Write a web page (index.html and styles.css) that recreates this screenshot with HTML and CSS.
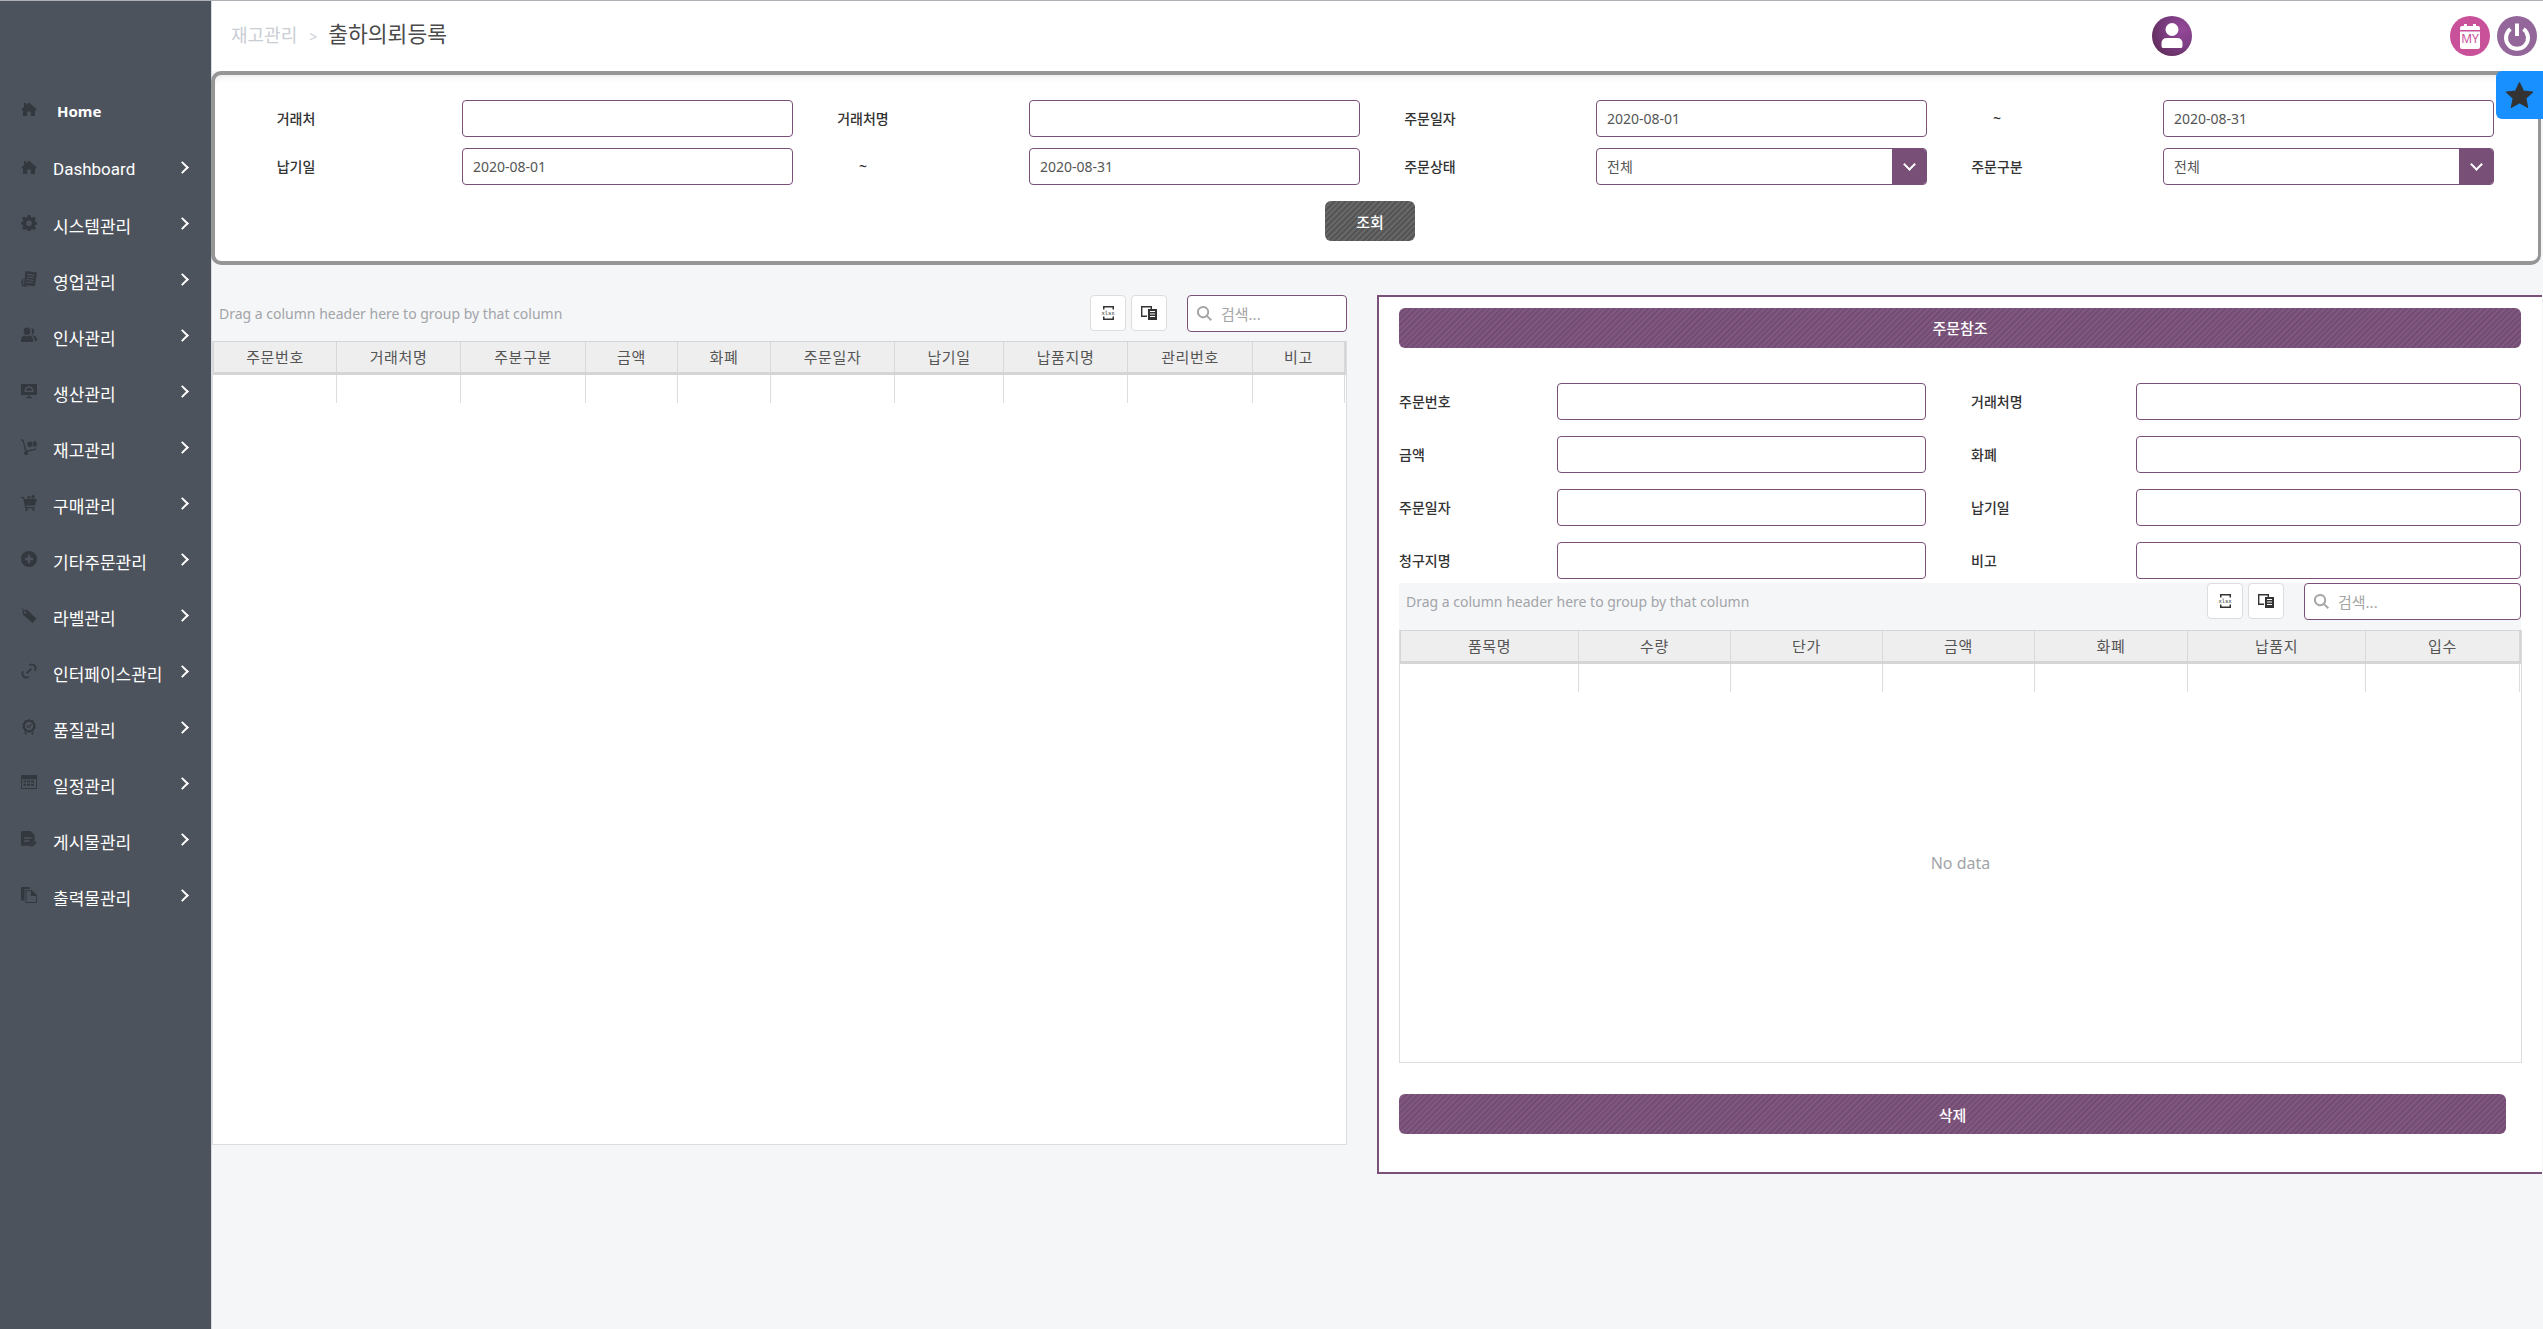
FILE: index.html
```html
<!DOCTYPE html>
<html lang="ko">
  <head>
    <meta charset="UTF-8" />
    <meta name="viewport" content="width=device-width, initial-scale=1.0" />
    <title>출하의뢰등록</title>
    <link rel="stylesheet" href="styles.css">
  </head>
  <body>
    <svg class="icon-defs" aria-hidden="true">
      <symbol id="i-home" viewBox="0 0 16 16"><path d="M8 1.6 15.8 8.6 14.7 9.7 14 9.1V15H9.8V10.6H6.2V15H2V9.1L1.3 9.7.2 8.6 3 6.1V2H5V4.3Z"/></symbol>
      <symbol id="i-cog" viewBox="0 0 16 16"><path fill-rule="evenodd" d="M6.6 0H9.4L9.8 2.2 11.2 2.8 13 1.5 15 3.500 13.7 5.300 14.200 6.700 16 7V9.600L14.200 10 13.700 11.400 15 13.200 13 15 11.200 13.900 9.800 14.400 9.400 16H6.600L6.200 14.400 4.800 13.900 3 15 1 13.200 2.300 11.400 1.800 10 0 9.600V7L1.800 6.700 2.300 5.300 1 3.500 3 1.500 4.800 2.800 6.200 2.200ZM8 5.500A2.800 2.800 0 1 0 8 11.100 2.800 2.800 0 1 0 8 5.500Z"/></symbol>
      <symbol id="i-news" viewBox="0 0 16 16"><path fill-rule="evenodd" d="M4.500 0 16 1.500 14 14.500 12.500 15.300 3 13.800 4.500 0ZM6.500 2.800 6.200 4 13.200 5 13.400 3.800ZM6 5.500 5.800 6.500 12.800 7.500 13 6.500ZM5.600 8 5.400 9 12.400 10 12.600 9ZM5.200 10.500 5 11.500 12 12.500 12.200 11.500Z"/><path d="M.5 9.500 2.500 7 2 13.500 8 15.500 2.500 15.800Q.5 15 .5 13Z"/></symbol>
      <symbol id="i-users" viewBox="0 0 16 16"><path d="M6 .5C8.200.5 9.400 2.200 9.400 4.200 9.400 6.200 8.200 8 6 8 3.800 8 2.600 6.200 2.600 4.200 2.600 2.200 3.800.5 6 .5ZM0 15V12.500C0 10.300 1.800 8.800 3.500 8.500 4.200 9 5 9.300 6 9.300 7 9.300 7.800 9 8.500 8.500 10.200 8.800 12 10.300 12 12.500V15ZM10 1.200C12 1 13.200 2.700 13.200 4.500 13.200 6.300 12 7.900 10.200 7.800 11 6.800 11.200 5.500 11.200 4.300 11.200 3.200 10.800 2.100 10 1.200ZM11 8.500C13 8.200 16 9.800 16 12.300V14H13.500V12.500C13.500 11 12.500 9.500 11 8.500Z"/></symbol>
      <symbol id="i-desktop" viewBox="0 0 16 16"><path fill-rule="evenodd" d="M0 1H16V12H0ZM8 3.200A4.500 4.500 0 0 0 3.500 7.700V9H12.500V7.700A4.500 4.500 0 0 0 8 3.200ZM8 4.800A2.900 2.900 0 0 1 10.900 7.700H5.100A2.900 2.900 0 0 1 8 4.800Z"/><path d="M5 14H7V12.500H9V14H11V15.300H5Z"/></symbol>
      <symbol id="i-dolly" viewBox="0 0 16 16"><path d="M0 0 2.500.8 5.500 11.500 15 9.500 15.300 10.800 6.600 12.800A2 2 0 1 1 4.200 12.300L1.600 2 0 1.400Z"/><path d="M6 3.500 10.500 2.300 11.800 7 7.300 8.200ZM11.500 3 15 2 16 7 12.800 7.700Z"/></symbol>
      <symbol id="i-cart" viewBox="0 0 16 16"><path d="M0 2H3L3.600 4H16L14 10.500H5.200L5.500 12H14V13.200H4.300L2.200 3.200H0Z"/><circle cx="5.500" cy="14.800" r="1.200"/><circle cx="12.500" cy="14.800" r="1.200"/><path d="M6 3.400 7 .8 9.500 1.400 9 3.400ZM10 3.400 11 0 14 .8 13.200 3.400Z"/></symbol>
      <symbol id="i-plus" viewBox="0 0 16 16"><path fill-rule="evenodd" d="M8 0A8 8 0 1 0 8 16 8 8 0 1 0 8 0ZM6.800 3.800H9.200V6.800H12.200V9.200H9.200V12.200H6.800V9.200H3.800V6.800H6.800Z"/></symbol>
      <symbol id="i-tag" viewBox="0 0 16 16"><path fill-rule="evenodd" d="M1.500 3.500 5.500 2.500 15.500 11.500 11.500 16 1.800 7.500ZM4.200 4.200A1.200 1.200 0 1 0 4.200 6.600 1.200 1.200 0 1 0 4.200 4.200Z"/><path d="M0 0 3 3 2.500 3.500 0 .8Z"/></symbol>
      <symbol id="i-link" viewBox="0 0 16 16"><path d="M10.800 0.500A4.700 4.700 0 0 1 14.300 8.300L13 7.200A3 3 0 0 0 8.800 3 L7.700 1.900A4.700 4.700 0 0 1 10.800.5ZM5.200 15.500A4.700 4.700 0 0 1 1.700 7.700L3 8.800A3 3 0 0 0 7.200 13L8.300 14.100A4.700 4.700 0 0 1 5.200 15.500ZM5 9.700 9.700 5 11 6.300 6.300 11Z"/></symbol>
      <symbol id="i-award" viewBox="0 0 16 16"><path fill-rule="evenodd" d="M8 0 10 1.200 12.400 1.200 13 3.400 14.800 5 14 7 14.800 9 13 10.600 12.400 12.600 10 12.800 8 14 6 12.800 3.600 12.600 3 10.600 1.200 9 2 7 1.200 5 3 3.400 3.600 1.200 6 1.200ZM8 2.800A4.200 4.200 0 1 0 8 11.200 4.200 4.200 0 1 0 8 2.800ZM11 5.600 7.500 9.200 5 7 5.800 6.100 7.400 7.500 10.200 4.700Z"/><path d="M3 13 5 13.500 6 14.500 4.500 16ZM13 13 11 13.500 10 14.500 11.500 16Z"/></symbol>
      <symbol id="i-calendar" viewBox="0 0 16 16"><path fill-rule="evenodd" d="M0 0H16V14H0ZM1 4.300V13H15V4.300Z"/><path d="M2.500 5.500H5V7.500H2.500ZM6 5.500H9V7.500H6ZM10 5.500H13V7.500H10ZM2.500 8.800H5V10.800H2.500ZM6 8.800H9V10.800H6ZM10 8.800H13V10.800H10Z"/></symbol>
      <symbol id="i-file" viewBox="0 0 16 16"><path fill-rule="evenodd" d="M1.500 0H9.500L13.500 4V9L9 14.800H1.500Q0 14.800 0 13.300V1.500Q0 0 1.500 0ZM3 6.300V7.700H10.500V6.300ZM3 9.300V10.700H8.500V9.300Z"/><path d="M13.800 9.800 15.800 11.500 11.500 15.600 9.500 16 9.800 14Z"/></symbol>
      <symbol id="i-copy" viewBox="0 0 16 16"><path d="M0 0H9V2H3.500V13.500H0Z"/><path fill-rule="evenodd" d="M4.500 3H10.500L16 8V16H4.500ZM5.500 4V15H15V9H9.800V4Z"/></symbol>
      <symbol id="i-excel" viewBox="0 0 11 14"><path d="M0 0H11V3.500H9.500V1.500H1.500V3.500H0ZM0 10.500H1.500V12.500H9.500V10.500H11V14H0Z"/></symbol>
      <symbol id="i-chooser" viewBox="0 0 16 16"><path fill-rule="evenodd" d="M0 1H11V4H9.600V2.400H1.400V10.600H6V12H0Z"/><path fill-rule="evenodd" d="M7 4H16V15H7ZM9 6V7H14V6ZM9 8.500V9.500H14V8.500ZM9 11V12H14V11Z"/></symbol>
      <symbol id="i-search" viewBox="0 0 16 16"><path d="M6.500 0A6.500 6.500 0 0 1 11.700 10.300L16 14.500 14.500 16 10.300 11.700A6.500 6.500 0 1 1 6.500 0ZM6.500 2A4.500 4.500 0 1 0 6.500 11 4.500 4.500 0 1 0 6.500 2Z"/></symbol>
    </svg>

    <div class="layout">
      <nav class="sidebar">
        <a class="nav-item nav-home"><svg class="nav-icon"><use href="#i-home"/></svg><span>Home</span></a>
        <a class="nav-item"><svg class="nav-icon"><use href="#i-home"/></svg><span class="nav-latin">Dashboard</span><i class="chevron"></i></a>
        <a class="nav-item"><svg class="nav-icon"><use href="#i-cog"/></svg><span>시스템관리</span><i class="chevron"></i></a>
        <a class="nav-item"><svg class="nav-icon"><use href="#i-news"/></svg><span>영업관리</span><i class="chevron"></i></a>
        <a class="nav-item"><svg class="nav-icon"><use href="#i-users"/></svg><span>인사관리</span><i class="chevron"></i></a>
        <a class="nav-item"><svg class="nav-icon"><use href="#i-desktop"/></svg><span>생산관리</span><i class="chevron"></i></a>
        <a class="nav-item"><svg class="nav-icon"><use href="#i-dolly"/></svg><span>재고관리</span><i class="chevron"></i></a>
        <a class="nav-item"><svg class="nav-icon"><use href="#i-cart"/></svg><span>구매관리</span><i class="chevron"></i></a>
        <a class="nav-item"><svg class="nav-icon"><use href="#i-plus"/></svg><span>기타주문관리</span><i class="chevron"></i></a>
        <a class="nav-item"><svg class="nav-icon"><use href="#i-tag"/></svg><span>라벨관리</span><i class="chevron"></i></a>
        <a class="nav-item"><svg class="nav-icon"><use href="#i-link"/></svg><span>인터페이스관리</span><i class="chevron"></i></a>
        <a class="nav-item"><svg class="nav-icon"><use href="#i-award"/></svg><span>품질관리</span><i class="chevron"></i></a>
        <a class="nav-item"><svg class="nav-icon"><use href="#i-calendar"/></svg><span>일정관리</span><i class="chevron"></i></a>
        <a class="nav-item"><svg class="nav-icon"><use href="#i-file"/></svg><span>게시물관리</span><i class="chevron"></i></a>
        <a class="nav-item"><svg class="nav-icon"><use href="#i-copy"/></svg><span>출력물관리</span><i class="chevron"></i></a>
      </nav>

      <main class="main">
        <header class="topbar">
          <div class="crumbs">
            <span class="crumb-parent">재고관리</span>
            <span class="crumb-sep">&gt;</span>
            <span class="crumb-title">출하의뢰등록</span>
          </div>
          <div class="round-btn user-btn">
            <svg viewBox="0 0 40 40"><circle cx="20" cy="13.500" r="6.500" fill="#fff"/><path d="M11 32Q9.500 32 9.500 30V27.500Q9.500 22 15 22H25Q30.500 22 30.500 27.500V30Q30.500 32 29 32Z" fill="#fff"/></svg>
          </div>
          <div class="round-btn my-btn">
            <svg viewBox="0 0 40 40"><path d="M10 12Q10 10 12 10H14V8H17V10H23V8H26V10H28Q30 10 30 12V31Q30 33 28 33H12Q10 33 10 31Z" fill="#fff"/><rect x="10" y="14" width="20" height="1.500" fill="#c9519a"/></svg>
            <span class="my-text">MY</span>
          </div>
          <div class="round-btn power-btn">
            <svg viewBox="0 0 40 40"><path d="M13.500 13A11 11 0 1 0 26.500 13" fill="none" stroke="#fff" stroke-width="4"/><path d="M20 7.500V20" stroke="#fff" stroke-width="4"/></svg>
          </div>
          <div class="star-tab">
            <svg viewBox="0 0 24 24"><path d="M12 1.500 15.200 8.300 22.800 9.200 17.200 14.300 18.700 21.800 12 18 5.300 21.800 6.800 14.300 1.200 9.200 8.800 8.300Z" fill="#333" stroke="#333" stroke-linejoin="round"/></svg>
          </div>
        </header>

        <section class="filter-panel">
          <div class="filter-grid">
            <div class="filter-item"><label>거래처</label><div class="input"></div></div>
            <div class="filter-item"><label>거래처명</label><div class="input"></div></div>
            <div class="filter-item"><label>주문일자</label><div class="input">2020-08-01</div></div>
            <div class="filter-item"><label>~</label><div class="input">2020-08-31</div></div>
            <div class="filter-item"><label>납기일</label><div class="input">2020-08-01</div></div>
            <div class="filter-item"><label>~</label><div class="input">2020-08-31</div></div>
            <div class="filter-item"><label>주문상태</label><div class="input select">전체<span class="select-arrow"><i class="chevron-down"></i></span></div></div>
            <div class="filter-item"><label>주문구분</label><div class="input select">전체<span class="select-arrow"><i class="chevron-down"></i></span></div></div>
          </div>
          <div class="filter-actions"><button class="search-btn">조회</button></div>
        </section>

        <div class="work">
          <section class="grid-left">
            <div class="grid-toolbar">
              <span class="group-hint">Drag a column header here to group by that column</span>
              <button class="tool-btn"><svg class="excel-icon"><use href="#i-excel"/></svg><b>xlsx</b></button>
              <button class="tool-btn"><svg class="chooser-icon"><use href="#i-chooser"/></svg></button>
              <div class="grid-search"><svg viewBox="0 0 16 16"><use href="#i-search"/></svg><span>검색...</span></div>
            </div>
            <div class="grid-box left-box">
              <div class="grid-head">
                <div>주문번호</div><div>거래처명</div><div>주분구분</div><div>금액</div><div>화폐</div><div>주문일자</div><div>납기일</div><div>납품지명</div><div>관리번호</div><div>비고</div>
              </div>
              <div class="grid-row">
                <div></div><div></div><div></div><div></div><div></div><div></div><div></div><div></div><div></div><div></div>
              </div>
            </div>
          </section>

          <section class="detail">
            <div class="bar-title">주문참조</div>
            <div class="detail-fields">
              <label>주문번호</label><div class="input"></div><label>거래처명</label><div class="input"></div>
              <label>금액</label><div class="input"></div><label>화폐</label><div class="input"></div>
              <label>주문일자</label><div class="input"></div><label>납기일</label><div class="input"></div>
              <label>청구지명</label><div class="input"></div><label>비고</label><div class="input"></div>
            </div>
            <div class="grid-toolbar detail-toolbar">
              <span class="group-hint">Drag a column header here to group by that column</span>
              <button class="tool-btn"><svg class="excel-icon"><use href="#i-excel"/></svg><b>xlsx</b></button>
              <button class="tool-btn"><svg class="chooser-icon"><use href="#i-chooser"/></svg></button>
              <div class="grid-search"><svg viewBox="0 0 16 16"><use href="#i-search"/></svg><span>검색...</span></div>
            </div>
            <div class="grid-box right-box">
              <div class="grid-head">
                <div>품목명</div><div>수량</div><div>단가</div><div>금액</div><div>화폐</div><div>납품지</div><div>입수</div>
              </div>
              <div class="grid-row">
                <div></div><div></div><div></div><div></div><div></div><div></div><div></div>
              </div>
              <div class="no-data">No data</div>
            </div>
            <button class="bar-delete">삭제</button>
          </section>
        </div>
      </main>
    </div>
  </body>
</html>
```

FILE: styles.css
```css
* {
  box-sizing: border-box;
}

html,
body {
  margin: 0;
  padding: 0;
  height: 100%;
  overflow: hidden;
}

body {
  background: #f5f6f8;
  border-top: 1px solid #aeb0b5;
  color: #333;
  font-family: "Noto Sans", "Noto Sans CJK KR", sans-serif;
  font-size: 14px;
}

.icon-defs {
  display: none;
}

.layout {
  display: flex;
  height: 1328px;
}

/* sidebar */
.sidebar {
  flex: 0 0 212px;
  padding-top: 80px;
  background: #4d535c;
  border-right: 1px solid #d8dade;
}

.nav-item {
  display: flex;
  align-items: center;
  height: 56px;
  padding-left: 21px;
  color: #fff;
  font-size: 17px;
}

.nav-icon {
  flex: none;
  width: 16px;
  height: 16px;
  margin: -4px 16px 0 0;
  fill: #33383e;
}

.nav-home {
  height: 60px;
  font-size: 15px;
  font-weight: 700;
}

.nav-home span {
  margin-left: 4px;
}

.nav-latin {
  font-family: Roboto, "Noto Sans", sans-serif;
}

.chevron {
  width: 9px;
  height: 9px;
  margin: -3px 24px 0 auto;
  border-top: 2px solid #fff;
  border-right: 2px solid #fff;
  transform: rotate(45deg);
}

/* top bar */
.main {
  flex: 1;
  min-width: 0;
}

.topbar {
  position: relative;
  display: flex;
  align-items: flex-start;
  height: 70px;
  background: #fff;
}

.crumbs {
  display: flex;
  align-items: baseline;
  flex: 1;
  padding: 16px 0 0 19px;
}

.crumb-parent {
  color: #c9cdd4;
  font-size: 18px;
}

.crumb-sep {
  margin: 0 11px 0 12px;
  color: #c9cdd4;
  font-size: 14px;
}

.crumb-title {
  color: #4a4a4a;
  font-size: 21.500px;
}

.round-btn {
  position: relative;
  flex: none;
  width: 40px;
  height: 40px;
  margin-top: 15px;
  border-radius: 50%;
}

.round-btn svg {
  display: block;
  width: 40px;
  height: 40px;
}

.user-btn {
  margin-right: 258px;
  background: radial-gradient(circle at 75% 35%, #95489a 0, #7a3c80 45%, #532548 100%);
}

.my-btn {
  margin-right: 7px;
  background: #c9519a;
}

.my-text {
  position: absolute;
  top: 15px;
  left: 0;
  width: 100%;
  color: #c9519a;
  font-size: 12px;
  line-height: 15px;
  text-align: center;
}

.power-btn {
  margin-right: 6px;
  background: #93679a;
}

/* lies over the corner of the filter panel */
.star-tab {
  position: absolute;
  top: 70px;
  right: 0;
  z-index: 2;
  width: 47px;
  height: 48px;
  padding: 10px 9px;
  background: #1890ff;
  border-radius: 6px 0 0 6px;
}

.star-tab svg {
  display: block;
  width: 29px;
  height: 29px;
}

/* filter panel */
.filter-panel {
  width: 2330px;
  height: 194px;
  margin-left: -1px;
  padding: 25px 23px 20px 10px;
  background: #fff;
  border: 4px solid #969696;
  border-right-width: 3px;
  border-radius: 10px;
  box-shadow: inset 0 6px 8px -6px rgba(0, 0, 0, 0.12);
}

.filter-grid {
  display: grid;
  grid-template-columns: repeat(4, 567px);
  row-gap: 11px;
}

.filter-item {
  display: flex;
  align-items: center;
}

.filter-item label {
  flex: 0 0 142px;
  margin-right: 95px;
  padding-bottom: 2px;
  color: #333;
  font-weight: 500;
  text-align: center;
}

.input {
  position: relative;
  flex: 0 0 331px;
  height: 37px;
  padding-left: 10px;
  background: #fff;
  border: 1px solid #7a5078;
  border-radius: 4px;
  color: #555;
  line-height: 35px;
  overflow: hidden;
}

.select-arrow {
  position: absolute;
  top: 0;
  right: 0;
  display: flex;
  align-items: center;
  justify-content: center;
  width: 34px;
  height: 100%;
  background: #784f76;
}

.chevron-down {
  width: 9px;
  height: 9px;
  margin-top: -4px;
  border-right: 2px solid #fff;
  border-bottom: 2px solid #fff;
  transform: rotate(45deg);
}

.filter-actions {
  display: flex;
  justify-content: center;
  margin-top: 16px;
}

.search-btn {
  width: 90px;
  height: 40px;
  border: 0;
  border-radius: 6px;
  background: repeating-linear-gradient(-45deg, #555 0 2px, #676767 2px 4px);
  color: #fff;
  font-family: inherit;
  font-size: 15px;
  font-weight: 500;
}

/* lower work area */
.work {
  display: flex;
  align-items: flex-start;
  margin-top: 30px;
}

.grid-left {
  flex: 0 0 1135px;
}

.grid-toolbar {
  display: flex;
  align-items: flex-start;
  height: 46px;
}

.group-hint {
  flex: 1;
  padding: 9px 0 0 7px;
  color: #a2a4a8;
  font-size: 14px;
  line-height: 20px;
}

.tool-btn {
  position: relative;
  width: 36px;
  height: 36px;
  margin-right: 5px;
  padding: 0;
  background: #fff;
  border: 1px solid #ddd;
  border-radius: 4px;
}

.tool-btn svg {
  display: block;
  margin: 0 auto;
  fill: #333;
}

.excel-icon {
  width: 11px;
  height: 14px;
}

.chooser-icon {
  width: 16px;
  height: 16px;
}

.tool-btn b {
  position: absolute;
  top: 11px;
  left: 0;
  width: 100%;
  color: #333;
  font-family: "DejaVu Sans Mono", monospace;
  font-size: 5.500px;
  font-weight: 400;
  line-height: 12px;
  text-align: center;
}

.grid-search {
  display: flex;
  align-items: center;
  width: 160px;
  height: 37px;
  margin-left: 15px;
  padding-left: 9px;
  background: #fff;
  border: 1px solid #7a5078;
  border-radius: 4px;
  color: #a5a5a5;
  font-size: 15px;
}

.grid-search svg {
  width: 15px;
  height: 15px;
  margin-right: 9px;
  fill: #a5a5a5;
}

.grid-box {
  background: #fff;
  border: 1px solid #ddd;
  border-top: 0;
}

.left-box {
  height: 804px;
}

.grid-head,
.grid-row {
  display: grid;
}

.left-box .grid-head,
.left-box .grid-row {
  grid-template-columns: 123px 124px 125px 92px 93px 124px 109px 124px 125px 92px;
}

.right-box .grid-head,
.right-box .grid-row {
  grid-template-columns: 178px 152px 152px 152px 153px 178px 154px;
}

.grid-head {
  height: 34px;
  background: #eee;
  border: 1px solid #d5d5d5;
  border-bottom-width: 3px;
  color: #555;
  font-size: 15px;
  letter-spacing: 0.600px;
  line-height: 30px;
  text-align: center;
}

.grid-head > div {
  border-right: 1px solid #d8d8d8;
}

.grid-row {
  height: 28px;
  padding-left: 1px;
}

.grid-row > div {
  border-right: 1px solid #ddd;
}

/* detail panel */
.detail {
  flex: 0 0 1165px;
  height: 879px;
  margin-left: 30px;
  padding: 11px 0 0 20px;
  background: #fff;
  border: 2px solid #7a5078;
  border-right: 0;
}

.bar-title,
.bar-delete {
  display: block;
  height: 40px;
  border: 0;
  border-radius: 6px;
  background: repeating-linear-gradient(-45deg, #744d74 0 2px, #80587f 2px 4px);
  color: #fff;
  font-family: inherit;
  font-size: 15px;
  font-weight: 500;
  line-height: 40px;
  text-align: center;
}

.bar-title {
  width: 1122px;
}

.bar-delete {
  width: 1107px;
  margin-top: 31px;
}

.detail-fields {
  display: grid;
  grid-template-columns: 158px 369px 210px 385px;
  width: 1122px;
  margin-top: 35px;
  align-items: center;
  row-gap: 16px;
}

.detail-fields label {
  padding-bottom: 2px;
  font-weight: 500;
}

.detail-fields label:nth-of-type(even) {
  padding-left: 45px;
}

.detail-toolbar {
  width: 1122px;
  height: 47px;
  margin-top: 4px;
  background: #f5f6f8;
}

.detail-toolbar .grid-search {
  width: 217px;
}

.right-box {
  position: relative;
  width: 1123px;
  height: 433px;
}

.no-data {
  display: flex;
  align-items: center;
  justify-content: center;
  height: 341px;
  color: #a2a4a8;
  font-size: 16px;
}
```
